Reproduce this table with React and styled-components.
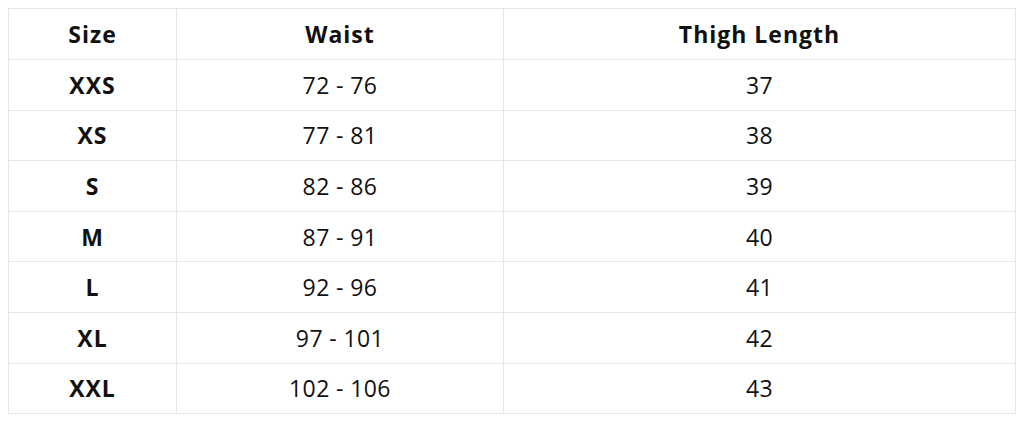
import React from "react";
import styled, { createGlobalStyle } from "styled-components";

const rows = [
  ["XXS", "72 - 76", "37"],
  ["XS", "77 - 81", "38"],
  ["S", "82 - 86", "39"],
  ["M", "87 - 91", "40"],
  ["L", "92 - 96", "41"],
  ["XL", "97 - 101", "42"],
  ["XXL", "102 - 106", "43"],
];

function App() {
  return (
    <>
      <GlobalStyle />
      <SizeTable>
        <colgroup>
          <col style={{ width: 168 }} />
          <col style={{ width: 327 }} />
          <col />
        </colgroup>
        <thead>
          <tr>
            <HeadCell>Size</HeadCell>
            <HeadCell>Waist</HeadCell>
            <HeadCell>Thigh Length</HeadCell>
          </tr>
        </thead>
        <tbody>
          {rows.map(([size, waist, thigh]) => (
            <tr key={size}>
              <Cell bold>{size}</Cell>
              <Cell>{waist}</Cell>
              <Cell>{thigh}</Cell>
            </tr>
          ))}
        </tbody>
      </SizeTable>
    </>
  );
}

const GlobalStyle = createGlobalStyle`
  body {
    margin: 8px;
    background: #fff;
    font-family: "Open Sans", "Noto Sans", sans-serif;
  }
`;

const SizeTable = styled.table`
  width: 1008px;
  border-collapse: collapse;
  table-layout: fixed;
`;

const HeadCell = styled.th`
  height: 50px;
  padding: 0;
  border: 1px solid #e6e6e6;
  text-align: center;
  font-size: 23px;
  font-weight: 700;
  letter-spacing: 1px;
  color: #111;
`;

const Cell = styled.td`
  height: 49.6px;
  padding: 0;
  border: 1px solid #e6e6e6;
  text-align: center;
  font-size: 23px;
  font-weight: ${(p) => (p.bold ? 700 : 400)};
  letter-spacing: ${(p) => (p.bold ? "1px" : "0.4px")};
  color: #111;
`;

export default App;
